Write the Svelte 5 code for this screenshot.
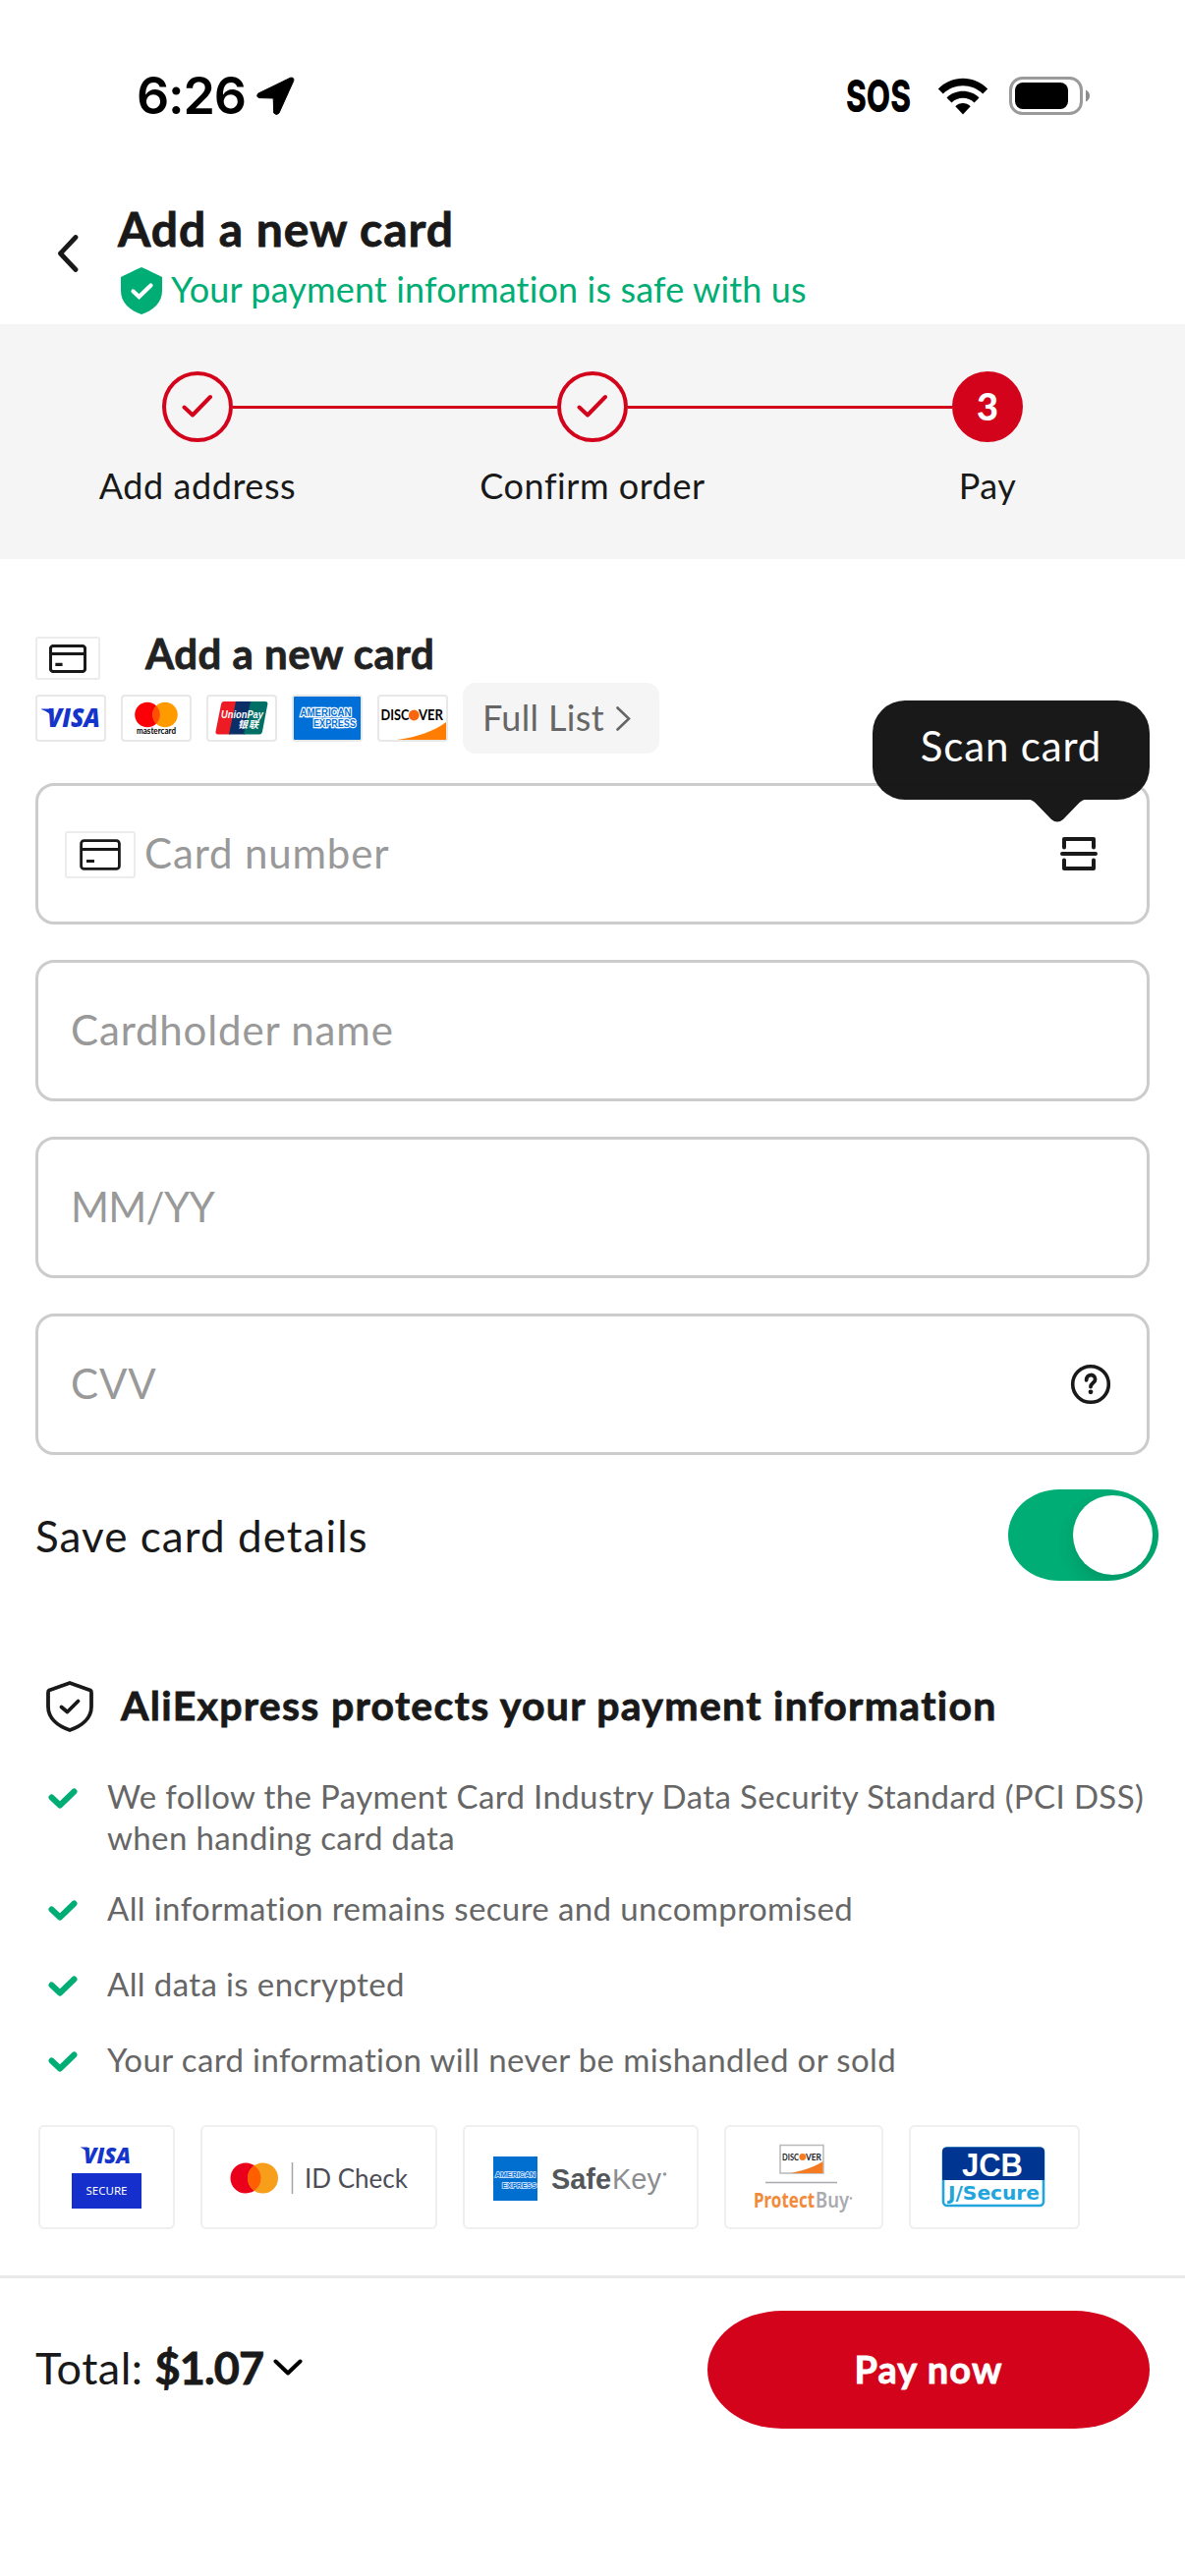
<script>
    // Checkout page: third step, adding a new bank card

    const steps = [
        { label: 'Add address', done: true },
        { label: 'Confirm order', done: true },
        { label: 'Pay', done: false }
    ];

    const promises = [
        'We follow the Payment Card Industry Data Security Standard (PCI DSS) when handing card data',
        'All information remains secure and uncompromised',
        'All data is encrypted',
        'Your card information will never be mishandled or sold'
    ];

    let saveCard = $state(true);
</script>

<!-- Outline of a bank card, used in the heading and in the number field -->
{#snippet cardIcon(width, height, stroke)}
    <svg {width} {height} viewBox="0 0 42 32" preserveAspectRatio="none" fill="none" stroke="#191919" stroke-width={stroke}>
        <rect x="1.6" y="1.6" width="38.8" height="28.8" rx="3" />
        <path d="M1.6 10.5h38.8M7 22.5h8" />
    </svg>
{/snippet}

<div class="page">

    <!-- ===== STATUS BAR ===== -->
    <div class="status-bar">
        <div class="status-time">
            <span>6:26</span>
            <svg width="40" height="40" viewBox="0 0 40 40">
                <path d="M3 17L35.500 1.200Q39.500 0.500 38.800 4.200L24 37Q21.500 40 18.700 37L18.200 22L4 21.600Q0 20.500 3 17Z" stroke="#000" stroke-width="1" stroke-linejoin="round" />
            </svg>
        </div>
        <div class="status-icons">
            <svg class="sos" width="68" height="42" viewBox="0 0 68 42">
                <text x="1" y="37" textLength="66" lengthAdjust="spacingAndGlyphs">SOS</text>
            </svg>
            <svg class="wifi" width="52" height="38" viewBox="0 0 52 38">
                <path d="M0.800 11.500C14.500-3 37.500-3 51.200 11.500L46.200 16.600C35.200 5.500 16.800 5.500 5.800 16.600Z" />
                <path d="M9.500 20.400C18.500 11.500 33.500 11.500 42.500 20.400L37.500 25.500C31 19.300 21 19.300 14.500 25.500Z" />
                <path d="M18.300 29.200C22.700 25 29.300 25 33.700 29.200L26 37.500Z" />
            </svg>
            <svg width="84" height="40" viewBox="0 0 84 40">
                <rect x="1.500" y="1.500" width="72" height="36" rx="12" fill="none" stroke="#9a9a9a" stroke-width="3" />
                <rect x="6" y="6" width="54" height="27" rx="8" />
                <path d="M78 13.500Q82 15.500 82 19.500T78 25.500Z" fill="#8c8c8c" />
            </svg>
        </div>
    </div>

    <!-- ===== HEADER ===== -->
    <header class="header">
        <svg class="back" width="24" height="38" viewBox="0 0 24 38" fill="none">
            <path d="M19 2.500L3.500 19L19 35.500" stroke="#191919" stroke-width="4.800" stroke-linecap="round" stroke-linejoin="round" />
        </svg>
        <div>
            <h1>Add a new card</h1>
            <div class="safe">
                <svg width="42" height="48" viewBox="0 0 42 48">
                    <path d="M21 0Q22 0 42 10V24C42 36 33 44 21 48C9 44 0 36 0 24V10Q20 0 21 0Z" fill="#00ae75" />
                    <path d="M12.500 24.500L18.500 30L30.500 18.500" fill="none" stroke="#fff" stroke-width="4.200" stroke-linecap="round" />
                </svg>
                <span>Your payment information is safe with us</span>
            </div>
        </div>
    </header>

    <!-- ===== PROGRESS STEPS ===== -->
    <section class="steps">
        <div class="track">
            {#each steps as step, i}
                {#if i > 0}<div class="line"></div>{/if}
                <div class="dot" class:current={!step.done}>
                    {#if step.done}
                        <svg width="32" height="26" viewBox="0 0 32 26" fill="none">
                            <path d="M2.500 13.500L11 21.500L29 3" stroke="#d3031c" stroke-width="4" stroke-linecap="round" stroke-linejoin="round" />
                        </svg>
                    {:else}
                        {i + 1}
                    {/if}
                </div>
            {/each}
        </div>
        <div class="labels">
            {#each steps as step}
                <span>{step.label}</span>
            {/each}
        </div>
    </section>

    <!-- ===== CARD FORM ===== -->
    <section class="form">
        <div class="form-head">
            <span class="icon-box">{@render cardIcon(38, 29, 3.4)}</span>
            <h2>Add a new card</h2>
        </div>

        <div class="brands">
            <span class="brand">
                <svg width="72" height="48" viewBox="0 0 72 48">
                    <text class="visa" x="12" y="33" font-size="26" textLength="54" lengthAdjust="spacingAndGlyphs">VISA</text>
                    <path d="M6 14.500H16L19 26Q15 17.500 6 15Z" fill="#1434cb" />
                </svg>
            </span>
            <span class="brand">
                <svg width="72" height="48" viewBox="0 0 72 48">
                    <circle cx="27" cy="20.500" r="12.800" fill="#fb0006" />
                    <circle cx="45" cy="20.500" r="12.800" fill="#ff9a00" />
                    <path d="M36 11.400A12.800 12.800 0 0 1 36 29.600A12.800 12.800 0 0 1 36 11.400Z" fill="#ff5000" />
                    <text x="16" y="39.500" font-family="Lato" font-weight="700" font-size="8.500" textLength="40" lengthAdjust="spacingAndGlyphs">mastercard</text>
                </svg>
            </span>
            <span class="brand">
                <svg width="72" height="48" viewBox="0 0 72 48">
                    <path d="M18 7H32L24 40.500H12Q9 40.500 9.500 37.500L15 10Q15.500 7 18 7Z" fill="#ed1c24" />
                    <path d="M30 7H46L39 40.500H23Z" fill="#0b2e66" />
                    <path d="M45 7H60Q63 7 62.300 10L57 37.500Q56.500 40.500 54 40.500H38Z" fill="#006f66" />
                    <g fill="#fff" font-weight="700" font-style="italic">
                        <text x="15" y="23.500" font-family="Liberation Sans" font-size="11.500" textLength="43" lengthAdjust="spacingAndGlyphs">UnionPay</text>
                        <text x="32" y="34" font-family="Noto Sans CJK SC" font-size="10" textLength="21">银联</text>
                    </g>
                </svg>
            </span>
            <span class="brand">
                <svg width="72" height="48" viewBox="0 0 72 48">
                    <rect x="2" y="2" width="68" height="44" rx="1" fill="#016fd8" />
                    <g font-family="Liberation Sans" font-weight="700" font-size="10.500" fill="#0470d6" stroke="#fff" stroke-width="2.400" paint-order="stroke">
                        <text x="8.500" y="21.500" textLength="52" lengthAdjust="spacingAndGlyphs">AMERICAN</text>
                        <text x="22" y="33" textLength="43" lengthAdjust="spacingAndGlyphs">EXPRESS</text>
                    </g>
                </svg>
            </span>
            <span class="brand">
                <svg width="72" height="48" viewBox="0 0 72 48">
                    <path d="M20 46C42 43 58 37 70 28V46Z" fill="#ff7d00" />
                    <g font-family="Lato" font-weight="700" font-size="14.500">
                        <text x="3.500" y="26" textLength="29" lengthAdjust="spacingAndGlyphs">DISC</text>
                        <text x="42" y="26" textLength="25" lengthAdjust="spacingAndGlyphs">VER</text>
                    </g>
                    <circle cx="37.300" cy="21" r="5.400" fill="#f9660f" />
                </svg>
            </span>
            <button class="full-list">
                <span>Full List</span>
                <svg width="15" height="25" viewBox="0 0 15 25" fill="none">
                    <path d="M1.500 1.500L13 12.500L1.500 23.500" stroke="#666" stroke-width="2.600" stroke-linecap="round" />
                </svg>
            </button>
        </div>

        <div class="fields">
            <div class="field number">
                <span class="icon-box wide">{@render cardIcon(42, 32, 2.8)}</span>
                <span class="hint">Card number</span>
                <svg class="scan" width="38" height="36" viewBox="0 0 38 36" fill="none" stroke="#191919" stroke-width="4" stroke-linecap="round" stroke-linejoin="round">
                    <path d="M4 11.500V3H34V11.500M2 18H36M4 24.500V33H34V24.500" />
                </svg>
                <div class="tooltip">
                    <span>Scan card</span>
                    <svg width="62" height="24" viewBox="0 0 62 24">
                        <path d="M0 0H62Q57 .5 53 4.500L37 21Q31 26 25 21L9 4.500Q5 .5 0 0Z" fill="#191919" />
                    </svg>
                </div>
            </div>
            <div class="field"><span class="hint">Cardholder name</span></div>
            <div class="field"><span class="hint date">MM/YY</span></div>
            <div class="field cvv">
                <span class="hint">CVV</span>
                <svg width="42" height="42" viewBox="0 0 42 42" fill="none" stroke="#191919">
                    <circle cx="21" cy="21" r="18.300" stroke-width="3.600" />
                    <path d="M16.600 16.800C16.800 9.800 25.600 10 25.600 16C25.600 19.500 21 19.500 21 23.600" stroke-width="3.800" stroke-linecap="round" />
                    <circle cx="21" cy="28.800" r="2.400" fill="#191919" stroke="none" />
                </svg>
            </div>
        </div>

        <div class="save-row">
            <span>Save card details</span>
            <button class="toggle" class:on={saveCard} aria-label="Save card details" onclick={() => (saveCard = !saveCard)}>
                <i class="knob"></i>
            </button>
        </div>
    </section>

    <!-- ===== PAYMENT PROTECTION ===== -->
    <section class="protect">
        <div class="protect-head">
            <svg width="48" height="52" viewBox="0 0 48 52" fill="none" stroke="#191919" stroke-width="3.800" stroke-linecap="round" stroke-linejoin="round">
                <path d="M24 2L45 9.500Q46 10 46 12V26C46 38 36 46 24 50C12 46 2 38 2 26V12Q2 10 3 9.500Z" />
                <path d="M15.500 26.500L21.500 31.500L32.500 20.500" />
            </svg>
            <h2>AliExpress protects your payment information</h2>
        </div>

        <ul>
            {#each promises as promise}
                <li>
                    <svg width="30" height="22" viewBox="0 0 30 22" fill="none">
                        <path d="M3.500 9.500L12 17.500L26.500 3.500" stroke="#00ae75" stroke-width="6" stroke-linecap="round" stroke-linejoin="round" />
                    </svg>
                    <span>{promise}</span>
                </li>
            {/each}
        </ul>

        <div class="badges">
            <svg width="139" height="106" viewBox="0 0 139 106">
                <text class="visa" x="46" y="39" font-size="23" textLength="48" lengthAdjust="spacingAndGlyphs">VISA</text>
                <path d="M43 22.500H50L52 32Q49 25 43 22.800Z" fill="#1434cb" />
                <rect x="34" y="49" width="71" height="36" fill="#142fcb" />
                <text x="48.500" y="70.500" font-family="Noto Sans" font-size="11.500" fill="#fff" textLength="42" lengthAdjust="spacingAndGlyphs">SECURE</text>
            </svg>
            <svg width="241" height="106" viewBox="0 0 241 106">
                <circle cx="46" cy="54" r="15.500" fill="#eb001b" />
                <circle cx="63.500" cy="54" r="15.500" fill="#f79e1b" />
                <path d="M54.800 41.200A15.500 15.500 0 0 1 54.800 66.800A15.500 15.500 0 0 1 54.800 41.200Z" fill="#ff5f00" />
                <path d="M93.500 38V70" stroke="#a3a3a8" stroke-width="1.500" />
                <text x="106" y="63.500" font-family="Lato" font-size="27" fill="#4d4d55" textLength="105" lengthAdjust="spacingAndGlyphs">ID Check</text>
            </svg>
            <svg width="240" height="106" viewBox="0 0 240 106">
                <rect x="31" y="32" width="45" height="45" fill="#016fd0" />
                <g font-family="Liberation Sans" font-weight="700" font-size="8" fill="#0470d6" stroke="#d9ebff" stroke-width="1.600" paint-order="stroke">
                    <text x="33" y="53" textLength="41" lengthAdjust="spacingAndGlyphs">AMERICAN</text>
                    <text x="40" y="64" textLength="35" lengthAdjust="spacingAndGlyphs">EXPRESS</text>
                </g>
                <text x="90" y="65" font-family="Liberation Sans" font-weight="700" font-size="30" fill="#53565a" textLength="61" lengthAdjust="spacingAndGlyphs">Safe</text>
                <text x="152" y="65" font-family="Liberation Sans" font-size="30" fill="#8b8d90" textLength="50" lengthAdjust="spacingAndGlyphs">Key</text>
                <circle cx="205.500" cy="50" r="1.800" fill="#97999b" />
            </svg>
            <svg width="162" height="106" viewBox="0 0 162 106">
                <rect x="57" y="20.500" width="44" height="28.500" fill="#fff" stroke="#b9b9b9" stroke-width="1.500" />
                <path d="M68 49C82 46 93 42 100.500 37V49Z" fill="#f47b20" />
                <g font-family="Lato" font-weight="700" font-size="8.500" fill="#222">
                    <text x="59" y="35.500" textLength="17" lengthAdjust="spacingAndGlyphs">DISC</text>
                    <text x="83" y="35.500" textLength="16" lengthAdjust="spacingAndGlyphs">VER</text>
                </g>
                <circle cx="79.800" cy="32.500" r="3.400" fill="#f47b20" />
                <path d="M42 58.500H115" stroke="#a9a9ae" stroke-width="1.500" />
                <text x="30" y="84" font-family="Noto Sans" font-weight="700" font-size="21" fill="#f28a3c" textLength="62" lengthAdjust="spacingAndGlyphs">Protect</text>
                <text x="93" y="84" font-family="Noto Sans" font-weight="600" font-size="21" fill="#a9abb0" textLength="34" lengthAdjust="spacingAndGlyphs">Buy</text>
                <circle cx="129" cy="74.500" r="1.300" fill="#a9abb0" />
            </svg>
            <svg width="174" height="106" viewBox="0 0 174 106">
                <rect x="35" y="23.500" width="102" height="58.500" rx="4" fill="#fff" stroke="#22a5dc" stroke-width="2.600" />
                <path d="M34 56V27Q34 22.500 38.500 22.500H133.500Q138 22.500 138 27V56Z" fill="#003591" />
                <text x="54" y="51.500" font-family="Liberation Sans" font-weight="700" font-size="33" fill="#fff" textLength="62" lengthAdjust="spacingAndGlyphs">JCB</text>
                <text x="40" y="75.500" font-family="DejaVu Sans" font-weight="700" font-size="19.500" fill="#22a5dc" textLength="93" lengthAdjust="spacingAndGlyphs">J/Secure</text>
            </svg>
        </div>
    </section>

    <!-- ===== BOTTOM BAR ===== -->
    <footer class="bottom-bar">
        <div class="total">
            <span>Total:</span>
            <strong>$1.07</strong>
            <svg width="30" height="18" viewBox="0 0 30 18" fill="none">
                <path d="M2.500 2.500L15 14.500L27.500 2.500" stroke="#000" stroke-width="4" stroke-linecap="round" stroke-linejoin="round" />
            </svg>
        </div>
        <button class="pay">Pay now</button>
    </footer>
</div>

<style>
    :global(body) {
        background: #fff;
    }

    .page {
        width: 1206px;
        min-height: 2622px;
        background: #fff;
        color: #191919;
        font-family: Lato, "Liberation Sans", sans-serif;
    }

    .page * {
        box-sizing: border-box;
    }

    svg {
        display: block;
        flex-shrink: 0;
    }

    h1, h2, ul {
        margin: 0;
        padding: 0;
    }

    /* Thicken the bold weight slightly */
    h1, h2, strong, .pay {
        -webkit-text-stroke: 0.8px currentColor;
    }

    button {
        border: 0;
        padding: 0;
        font-family: inherit;
    }

    /* ===== STATUS BAR ===== */
    .status-bar {
        height: 196px;
        padding: 0 95px 0 139px;
        display: flex;
        align-items: center;
        justify-content: space-between;
        color: #000;
    }

    .status-time {
        display: flex;
        align-items: center;
        gap: 10px;
        font-family: Inter, sans-serif;
        font-size: 52px;
        font-weight: 600;
        line-height: 60px;
        letter-spacing: -1.2px;
    }

    .status-icons {
        display: flex;
        align-items: center;
    }

    .sos text {
        font-family: Inter, sans-serif;
        font-size: 45px;
        font-weight: 800;
    }

    .wifi { margin: 0 21px 0 26px; }

    /* ===== HEADER ===== */
    .header {
        height: 134px;
        padding: 8px 0 0 58px;
        display: flex;
        gap: 38px;
    }

    .back { margin-top: 35px; }

    .header h1 {
        font-size: 48px;
        line-height: 58px;
        letter-spacing: 0.95px;
    }

    .safe {
        margin-top: 10px;
        padding-left: 3px;
        display: flex;
        gap: 9px;
        color: #00ae75;
        font-size: 36px;
        line-height: 44px;
        letter-spacing: 0.15px;
    }

    /* ===== PROGRESS STEPS ===== */
    .steps {
        height: 239px;
        padding-top: 48px;
        background: #f5f5f5;
    }

    .track {
        display: flex;
        align-items: center;
        padding: 0 165px;
    }

    .line {
        flex: 1;
        height: 3px;
        background: #d3031c;
    }

    .dot {
        width: 72px;
        height: 72px;
        display: flex;
        align-items: center;
        justify-content: center;
        border: 4px solid #d3031c;
        border-radius: 50%;
        color: #fff;
        font-size: 38px;
        font-weight: 900;
        line-height: 60px;
    }

    .dot.current { 
        padding-bottom: 2px;
        background: #d3031c;
    }

    .labels {
        margin-top: 22px;
        display: grid;
        grid-template-columns: repeat(3, 1fr);
        text-align: center;
        font-size: 36px;
        line-height: 45px;
        letter-spacing: 0.55px;
    }

    /* ===== CARD FORM ===== */
    .form { padding: 71px 36px 0; }

    .form-head {
        height: 52px;
        display: flex;
        align-items: flex-end;
        gap: 46px;
    }

    .form-head h2 {
        align-self: flex-start;
        font-size: 42px;
        line-height: 51px;
        letter-spacing: 0.48px;
        color: #222;
    }

    .icon-box {
        width: 66px;
        height: 44px;
        display: flex;
        align-items: center;
        justify-content: center;
        border: 2px solid #ececec;
        border-radius: 3px;
    }

    .icon-box.wide {
        width: 72px;
        height: 48px;
        margin-top: 2px;
    }

    .brands {
        margin-top: 3px;
        display: flex;
        align-items: center;
        gap: 15px;
    }

    .brand {
        width: 72px;
        height: 48px;
        border-radius: 4px;
        box-shadow: inset 0 0 0 2px #e8e8e8;
    }

    .visa {
        font-family: "Open Sans", sans-serif;
        font-weight: 800;
        font-style: italic;
        fill: #1434cb;
    }

    .full-list {
        width: 200px;
        height: 72px;
        padding-left: 20px;
        display: flex;
        align-items: center;
        gap: 12px;
        border-radius: 13px;
        background: #f5f5f5;
        color: #666;
        font-size: 36px;
        letter-spacing: 0.35px;
    }

    .full-list span { padding-bottom: 3px; }

    .fields {
        margin-top: 30px;
        display: flex;
        flex-direction: column;
        gap: 36px;
    }

    .field {
        position: relative;
        height: 144px;
        padding: 0 34px 0 33px;
        display: flex;
        align-items: center;
        border: 3px solid #ccc;
        border-radius: 19px;
        color: #999;
        font-size: 42px;
        line-height: 50px;
    }

    .hint {
        padding-bottom: 3px;
        letter-spacing: 0.85px;
    }

    .hint.date { letter-spacing: -0.7px; }

    .number {
        padding: 0 50px 0 27px;
        gap: 9px;
    }

    .scan { margin-left: auto; }

    .cvv {
        padding-right: 36px;
        justify-content: space-between;
    }

    /* Dark bubble over the top right corner of the number field */
    .tooltip {
        position: absolute;
        top: -87px;
        right: -3px;
        width: 282px;
        height: 101px;
        border-radius: 33px;
        background: rgba(20, 20, 20, 0.98);
        color: #fff;
        text-align: center;
        line-height: 92px;
        letter-spacing: 0.85px;
    }

    .tooltip svg {
        position: absolute;
        top: 100px;
        left: 157px;
    }

    .save-row {
        height: 93px;
        margin: 35px -9px 0 0;
        display: flex;
        align-items: center;
        justify-content: space-between;
        font-size: 44px;
        letter-spacing: 1.05px;
    }

    .toggle {
        width: 153px;
        height: 93px;
        padding: 6px;
        display: flex;
        border-radius: 52px / 46.5px;
        background: #ccc;
        overflow: hidden;
    }

    .toggle.on {
        justify-content: flex-end;
        background: #00ae75;
    }

    .knob {
        width: 81px;
        height: 81px;
        border-radius: 50%;
        background: #fff;
        box-shadow: 0 8px 20px rgba(0, 0, 0, 0.14);
    }

    /* ===== PAYMENT PROTECTION ===== */
    .protect { padding: 102px 36px 0 39px; }

    .protect-head {
        display: flex;
        align-items: center;
        gap: 28px;
        padding-left: 8px;
        height: 52px;
    }

    .protect-head h2 {
        padding-bottom: 3px;
        font-size: 41px;
        line-height: 48px;
        letter-spacing: 1.3px;
    }

    ul {
        margin-top: 44px;
        display: flex;
        flex-direction: column;
        gap: 35px;
        list-style: none;
    }

    li {
        display: flex;
        gap: 30px;
        padding-left: 10px;
        color: #666;
        font-size: 33px;
        line-height: 42px;
        letter-spacing: 0.38px;
        white-space: normal;
    }

    li:first-child { margin-bottom: -5px; }

    li svg { margin-top: 13px; }

    li span {
        margin-right: -20px;
    }

    .badges {
        margin-top: 46px;
        display: flex;
        gap: 26px;
    }

    .badges svg {
        border-radius: 6px;
        box-shadow: inset 0 0 0 2px #efeff0;
    }

    /* ===== BOTTOM BAR ===== */
    .bottom-bar {
        margin-top: 47px;
        padding: 33px 36px 0;
        display: flex;
        align-items: center;
        justify-content: space-between;
        border-top: 3px solid #e9e9e9;
    }

    .total {
        display: flex;
        align-items: center;
        font-size: 45px;
        line-height: 54px;
        padding-bottom: 4px;
    }

    .total span { letter-spacing: 0.5px; }

    .total strong {
        margin: 0 10px 0 12px;
        letter-spacing: -0.9px;
    }

    .pay {
        width: 450px;
        height: 120px;
        padding-bottom: 3px;
        border-radius: 76px / 60px;
        background: #d3031c;
        color: #fff;
        font-size: 38px;
        font-weight: 700;
        letter-spacing: 1.1px;
    }
</style>
